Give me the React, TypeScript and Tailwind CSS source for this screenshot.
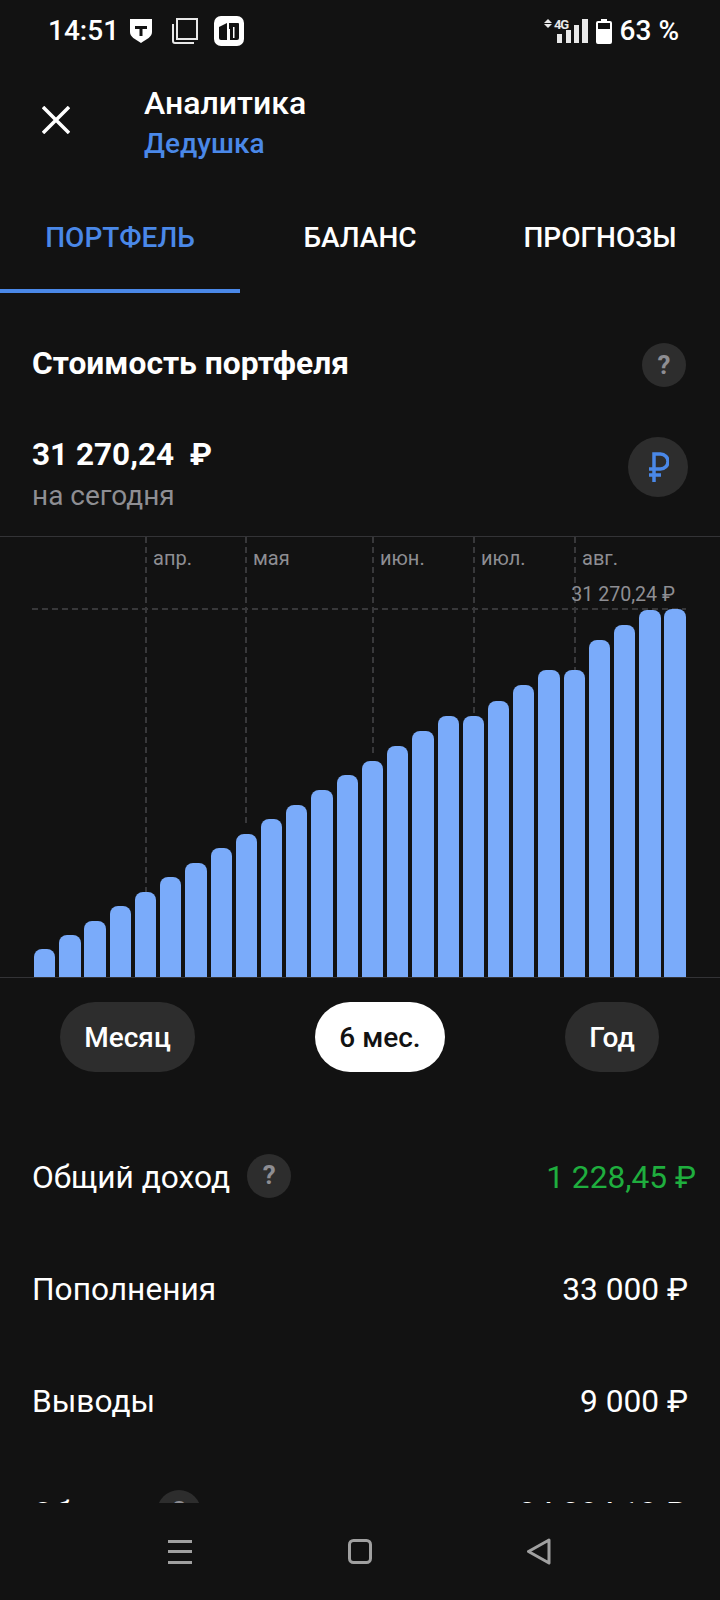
const barTops = [
  949, 935, 921, 906, 892, 877, 863, 848, 834, 819, 805, 790, 775, 761, 746, 731, 716, 716, 701, 685, 670, 670, 640, 625, 610, 609,
];

const months = [
  { label: 'апр.', x: 145, bottom: 80 },
  { label: 'мая', x: 245, bottom: 150 },
  { label: 'июн.', x: 372, bottom: 220 },
  { label: 'июл.', x: 473, bottom: 250 },
  { label: 'авг.', x: 574, bottom: 300 },
];

function HelpBadge() {
  return (
    <div className="w-[44px] h-[44px] rounded-full bg-[#2d2d2d] flex items-center justify-center text-[#8e8e93] text-[26px] font-bold">
      ?
    </div>
  );
}

function StatusBar() {
  return (
    <div className="h-[62px] shrink-0 flex items-center justify-between pl-[48px] pr-[41px] text-white">
      <div className="flex items-center">
        <span className="text-[28px] font-medium leading-none">14:51</span>
        <svg className="ml-[10px]" width="24" height="26" viewBox="0 0 24 26">
          <path d="M1 1h22v13c0 5-5 7-11 11C6 21 1 19 1 14z" fill="#fff" />
          <path d="M6 8h12v3h-4.500v7h-3v-7H6z" fill="#121212" />
        </svg>
        <svg className="ml-[18px]" width="28" height="28" viewBox="0 0 28 28" fill="none" stroke="#e8e8e8" strokeWidth="2">
          <rect x="6" y="2" width="20" height="20" />
          <path d="M2 7v17a2 2 0 0 0 2 2h19" />
        </svg>
        <svg className="ml-[15px]" width="30" height="30" viewBox="0 0 30 30">
          <rect width="30" height="30" rx="7" fill="#fff" />
          <path d="M5 11l8-4v17H7a2 2 0 0 1-2-2z" fill="#121212" />
          <path d="M15 7h9a1 1 0 0 1 1 1v14a2 2 0 0 1-2 2h-8z" fill="#121212" />
          <path d="M13 13h3v11h-3zM19 11h1.500v11H19z" fill="#fff" />
        </svg>
      </div>
      <div className="flex items-center">
        <svg width="46" height="26" viewBox="0 0 46 26" fill="#e8e8e8" className="mr-[6px]">
          <path d="M4 1l4 4H0zM4 10l4-4H0z" />
          <text x="10" y="11" fontSize="13" fontWeight="700" fontFamily="Roboto, sans-serif" textLength="15">4G</text>
          <rect x="13" y="16" width="5" height="9" />
          <rect x="22" y="12" width="5" height="13" />
          <rect x="30" y="7" width="5" height="18" />
          <rect x="38" y="1" width="6" height="24" />
        </svg>
        <svg width="16" height="25" viewBox="0 0 16 25" className="mr-[8px]">
          <path d="M5 0h6v2h3a2 2 0 0 1 2 2v19a2 2 0 0 1-2 2H2a2 2 0 0 1-2-2V4a2 2 0 0 1 2-2h3z" fill="#fff" />
          <rect x="2" y="4" width="12" height="6" fill="#121212" />
        </svg>
        <span className="text-[28px] font-medium leading-none">63 %</span>
      </div>
    </div>
  );
}

function Header() {
  return (
    <div className="h-[116px] shrink-0 flex items-center pl-[42px]">
      <svg width="28" height="28" viewBox="0 0 28 28" stroke="#fff" strokeWidth="3.500">
        <path d="M1 1l26 26M27 1L1 27" />
      </svg>
      <div className="ml-[74px] mt-[7px] flex flex-col">
        <span className="text-[32px] leading-[40px] font-medium text-white">Аналитика</span>
        <span className="text-[28px] leading-[42px] font-medium text-[#4a88e8]">Дедушка</span>
      </div>
    </div>
  );
}

function Tabs() {
  return (
    <div className="h-[115px] shrink-0 grid grid-cols-3 text-[28px] font-medium text-white">
      <div className="flex items-center justify-center border-b-4 border-[#4a88e8] text-[#4a88e8] pt-[9px]">ПОРТФЕЛЬ</div>
      <div className="flex items-center justify-center pt-[5px]">БАЛАНС</div>
      <div className="flex items-center justify-center pt-[5px]">ПРОГНОЗЫ</div>
    </div>
  );
}

function Chart() {
  return (
    <div className="relative h-[442px] mt-[39px] border-y border-[#333336]">
      {months.map((m) => (
        <div key={m.label}>
          <div
            className="absolute top-0 w-[2px] bg-[repeating-linear-gradient(to_bottom,#38383a_0_6px,transparent_6px_10px)]"
            style={{ left: m.x, bottom: m.bottom }}
          />
          <span
            className="absolute top-[9px] text-[20px] leading-[24px] text-[#8e8e93]"
            style={{ left: m.x + 8 }}
          >
            {m.label}
          </span>
        </div>
      ))}
      <div className="absolute left-[32px] right-[34px] top-[71px] h-[2px] bg-[repeating-linear-gradient(to_right,#38383a_0_6px,transparent_6px_10px)]" />
      <span className="absolute right-[45px] top-[46px] text-[19.600px] leading-[24px] text-[#8e8e93]">31 270,24 ₽</span>
      <div className="relative h-full flex items-end justify-between pl-[34px] pr-[34px]">
        {barTops.map((top, i) => (
          <div
            key={i}
            className="w-[21.300px] bg-[#7aabfa] rounded-t-[8px]"
            style={{ height: 977 - top }}
          />
        ))}
      </div>
    </div>
  );
}

function Row({ label, value, help, green, pr }: { label: string; value: string; help?: boolean; green?: boolean; pr: string }) {
  return (
    <div className={`h-[112px] shrink-0 flex items-center justify-between pl-[32px] text-[31.700px] text-white ${pr}`}>
      <div className="flex items-center gap-[17px]">
        <span>{label}</span>
        {help && <div className="-mt-[4px]"><HelpBadge /></div>}
      </div>
      <span className={green ? 'text-[#1fae3e]' : ''}>{value}</span>
    </div>
  );
}

export default function App() {
  return (
    <div className="w-[720px] h-[1600px] bg-[#121212] flex flex-col overflow-hidden font-['Roboto',sans-serif]">
      <StatusBar />
      <Header />
      <Tabs />
      <div className="h-[1210px] shrink-0 overflow-hidden">
        <div className="mt-[50px] h-[44px] flex items-center justify-between pl-[32px] pr-[34px]">
          <span className="text-[31.750px] font-bold text-white -mt-[2px]">Стоимость портфеля</span>
          <HelpBadge />
        </div>
        <div className="mt-[50px] h-[60px] flex items-center justify-between pl-[32px] pr-[32px]">
          <div className="flex flex-col mt-[18px]">
            <span className="text-[31.500px] leading-[38px] font-bold text-white">31 270,24&nbsp;&nbsp;₽</span>
            <span className="text-[28px] leading-[43px] text-[#8e8e93]">на сегодня</span>
          </div>
          <div className="w-[60px] h-[60px] rounded-full bg-[#2d2d2d] flex items-center justify-center">
            <svg width="22" height="32" viewBox="0 0 22 32" fill="none" stroke="#4a88e8" strokeWidth="3.500">
              <path d="M7 31V3h6.500a7.500 7.500 0 0 1 0 15H2M2 24h12" />
            </svg>
          </div>
        </div>
        <Chart />
        <div className="mt-[24px] h-[70px] text-[28px] font-medium flex items-center pl-[60px] pr-[61px] justify-between">
          <div className="w-[135px] h-[70px] pt-[2px] rounded-full bg-[#2d2d2d] text-white flex items-center justify-center">Месяц</div>
          <div className="w-[130px] h-[70px] pt-[2px] rounded-full bg-white text-[#121212] flex items-center justify-center">6 мес.</div>
          <div className="w-[94px] h-[70px] pt-[2px] rounded-full bg-[#2d2d2d] text-white flex items-center justify-center">Год</div>
        </div>
        <div className="mt-[50px] flex flex-col">
          <Row label="Общий доход" value="1 228,45 ₽" help green pr="pr-[24px]" />
          <Row label="Пополнения" value="33 000 ₽" pr="pr-[32px]" />
          <Row label="Выводы" value="9 000 ₽" pr="pr-[32px]" />
          <Row label="Оборот" value="24 284,13 ₽" help pr="pr-[34px]" />
        </div>
      </div>
      <div className="flex-1 flex items-center pl-[168px]">
        <svg width="24" height="24" viewBox="0 0 24 24" fill="#a0a0a0">
          <rect y="0" width="24" height="3" />
          <rect y="10" width="24" height="3" />
          <rect y="21" width="24" height="3" />
        </svg>
        <svg className="ml-[156px]" width="24" height="25" viewBox="0 0 24 25" fill="none" stroke="#a0a0a0" strokeWidth="3">
          <rect x="1.500" y="1.500" width="21" height="22" rx="4" />
        </svg>
        <svg className="ml-[155px]" width="24" height="27" viewBox="0 0 24 27" fill="none" stroke="#a0a0a0" strokeWidth="3" strokeLinejoin="round">
          <path d="M22 2L1.500 13.500 22 25z" />
        </svg>
      </div>
    </div>
  );
}
